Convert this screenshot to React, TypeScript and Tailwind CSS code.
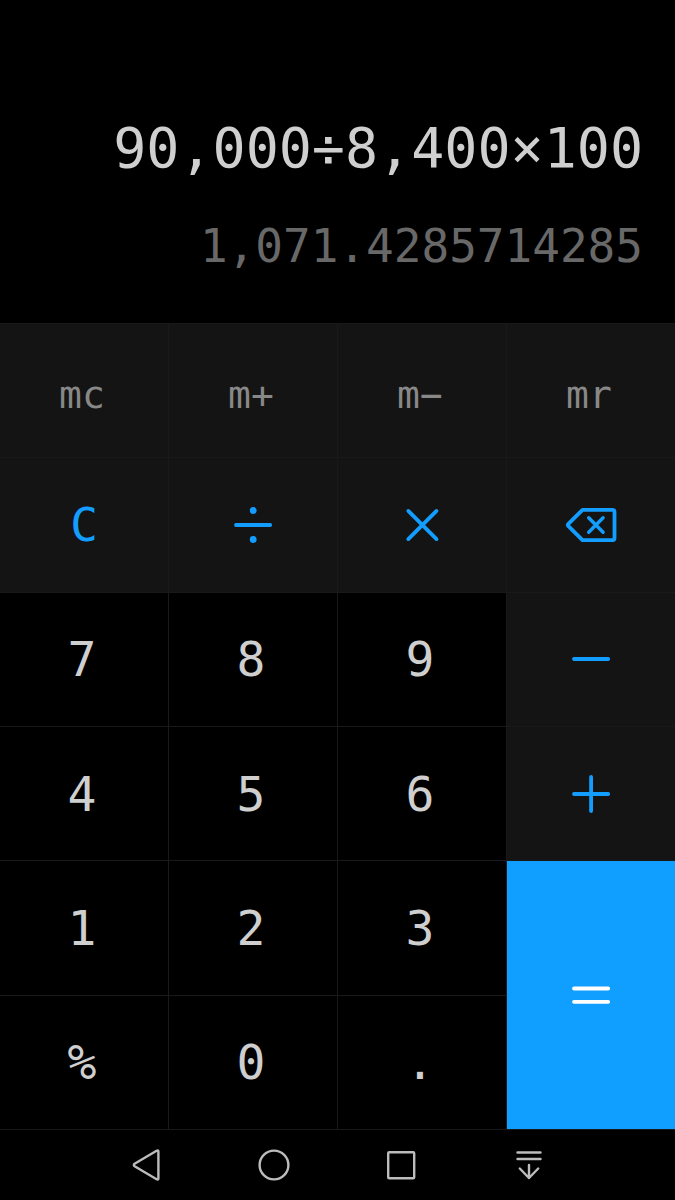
import type { ReactNode } from "react";

function Icon({ children }: { children: ReactNode }) {
  return (
    <svg
      aria-hidden="true"
      className="size-14"
      viewBox="0 0 56 56"
      fill="none"
      stroke="currentColor"
      strokeWidth="3.8"
      strokeLinecap="round"
      strokeLinejoin="round"
    >
      {children}
    </svg>
  );
}

function NavIcon({ children }: { children: ReactNode }) {
  return (
    <svg
      aria-hidden="true"
      className="size-10"
      viewBox="0 0 40 40"
      fill="none"
      stroke="currentColor"
      strokeWidth="2.4"
      strokeLinecap="round"
      strokeLinejoin="round"
    >
      {children}
    </svg>
  );
}

type KeyKind = "memory" | "digit" | "action" | "equals";

const kindClass: Record<KeyKind, string> = {
  memory: "bg-[#141414] text-[#888888] text-[38px] pt-2 pr-1",
  digit: "bg-black text-[#cfcfcf] text-[48px] pr-1",
  action: "bg-[#141414] text-[#139eff] text-[46px]",
  equals: "bg-[#109eff] text-white row-span-2",
};

interface Key {
  label: string;
  kind: KeyKind;
  face: ReactNode;
}

const text = (face: string, kind: KeyKind): Key => ({ label: face, kind, face });

const keys: Key[] = [
  text("mc", "memory"),
  text("m+", "memory"),
  text("m−", "memory"),
  text("mr", "memory"),
  text("C", "action"),
  {
    label: "Divide",
    kind: "action",
    face: (
      <Icon>
        <path d="M11 28H45.2" />
        <circle cx="28.2" cy="13.5" r="3.4" fill="currentColor" stroke="none" />
        <circle cx="28.2" cy="42.5" r="3.4" fill="currentColor" stroke="none" />
      </Icon>
    ),
  },
  {
    label: "Multiply",
    kind: "action",
    face: (
      <Icon>
        <path d="M14.3 13.9L42.5 42.1M42.5 13.9L14.3 42.1" />
      </Icon>
    ),
  },
  {
    label: "Backspace",
    kind: "action",
    face: (
      <Icon>
        <path d="M19.5 12.9H49.5Q51.5 12.9 51.5 14.9V41.1Q51.5 43.1 49.5 43.1H19.5L5.4 29.2Q4.3 28 5.4 26.8Z" />
        <path d="M25.7 20.7L40.1 35.3M40.1 20.7L25.7 35.3" strokeWidth="3.4" />
      </Icon>
    ),
  },
  text("7", "digit"),
  text("8", "digit"),
  text("9", "digit"),
  {
    label: "Subtract",
    kind: "action",
    face: (
      <Icon>
        <path d="M11 28H45.2" />
      </Icon>
    ),
  },
  text("4", "digit"),
  text("5", "digit"),
  text("6", "digit"),
  {
    label: "Add",
    kind: "action",
    face: (
      <Icon>
        <path d="M11 28H45.2M28.1 10.9V45.1" />
      </Icon>
    ),
  },
  text("1", "digit"),
  text("2", "digit"),
  text("3", "digit"),
  {
    label: "Equals",
    kind: "equals",
    face: (
      <Icon>
        <path d="M11 21.5H45.2M11 34.8H45.2" />
      </Icon>
    ),
  },
  text("%", "digit"),
  text("0", "digit"),
  text(".", "digit"),
];

const navItems = [
  { label: "Back", icon: <path d="M8.6 18.8L30.6 5.8Q32.4 4.8 32.4 6.8V33.2Q32.4 35.2 30.6 34.2L8.6 21.2Q7 20 8.6 18.8Z" /> },
  { label: "Home", icon: <circle cx="20" cy="20" r="14.4" /> },
  { label: "Recent apps", icon: <rect x="7.2" y="7.2" width="26" height="26" rx="1" /> },
  {
    label: "Hide navigation bar",
    icon: <path d="M8.5 7.5H31.5M8.5 14H31.5M20 20V33M10.8 23.5L20 33L29.2 23.5" />,
  },
];

export default function App() {
  return (
    <main className="flex min-h-screen flex-col bg-black font-['DejaVu_Sans_Mono',monospace]">
      <section
        aria-label="Display"
        className="flex flex-col items-end justify-end gap-[38px] whitespace-nowrap px-8 pt-[116px] pb-[49px]"
      >
        <div className="text-[55px] leading-[64px] text-[#cfcfcf]">90,000÷8,400×100</div>
        <output className="text-[46px] leading-[56px] text-[#686868]">1,071.4285714285</output>
      </section>

      <section
        aria-label="Keypad"
        className="grid flex-1 grid-cols-4 grid-rows-6 gap-px bg-[#191919] py-px"
      >
        {keys.map((key) => (
          <button
            key={key.label}
            type="button"
            aria-label={key.label}
            className={`flex items-center justify-center leading-none ${kindClass[key.kind]}`}
          >
            {key.face}
          </button>
        ))}
      </section>

      <nav aria-label="System" className="grid h-[70px] grid-cols-4 px-[82px] text-[#bcbcbc]">
        {navItems.map((item) => (
          <button
            key={item.label}
            type="button"
            aria-label={item.label}
            className="flex items-center justify-center"
          >
            <NavIcon>{item.icon}</NavIcon>
          </button>
        ))}
      </nav>
    </main>
  );
}
